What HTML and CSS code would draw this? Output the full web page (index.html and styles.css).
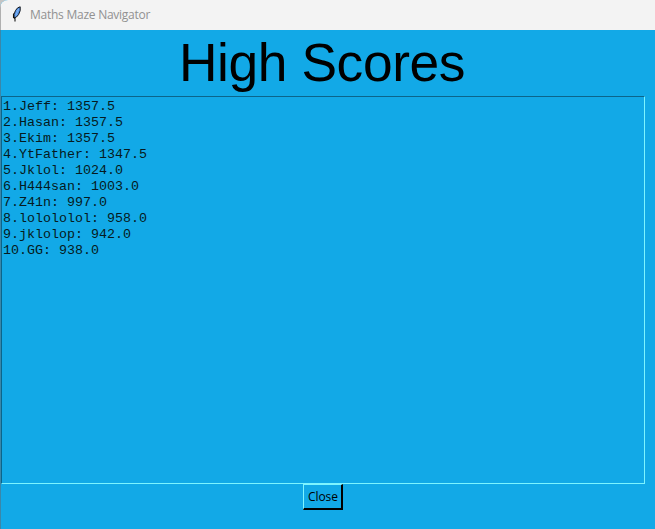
FILE: index.html
```html
<!DOCTYPE html>
<html lang="en">
<head>
<meta charset="utf-8">
<title>Maths Maze Navigator</title>
<link rel="stylesheet" href="styles.css">
</head>
<body>
<div class="window">
  <header class="titlebar">
    <svg class="feather" width="10" height="16" viewBox="0 0 10 16" aria-hidden="true">
      <path d="M8.2 .8 Q5.5 1 3.5 4.5 Q1.3 8.5 2 12 Q4.6 11.8 6.6 8.5 Q9 4.5 8.2 .8Z" fill="#5596ea" stroke="#15171c" stroke-width="1"/>
      <path d="M6.6 3 Q5 6 3.8 9.5" fill="none" stroke="#86b5f2" stroke-width="1"/>
      <path d="M1.5 7.5 V11.5 L3 12.5 V15.5" fill="none" stroke="#111" stroke-width="1.1"/>
    </svg>
    <span class="caption">Maths Maze Navigator</span>
  </header>
  <main class="content">
    <h1 class="heading">High Scores</h1>
    <pre class="scores">1.Jeff: 1357.5
2.Hasan: 1357.5
3.Ekim: 1357.5
4.YtFather: 1347.5
5.Jklol: 1024.0
6.H444san: 1003.0
7.Z41n: 997.0
8.lolololol: 958.0
9.jklolop: 942.0
10.GG: 938.0</pre>
    <button class="close">Close</button>
  </main>
</div>
</body>
</html>
```
FILE: styles.css
```css
* {
  box-sizing: border-box;
}

body {
  margin: 0;
  background: #c4c4c4;
}

.window {
  width: 655px;
  height: 529px;
  display: flex;
  flex-direction: column;
  border-top-left-radius: 8px;
  overflow: hidden;
  background: #12a9e7;
}

.titlebar {
  height: 30px;
  flex: none;
  display: flex;
  align-items: center;
  padding-left: 11px;
  border-left: 1px solid #b0b0b0;
  background: #f3f3f3;
}

.feather {
  margin-top: -2px;
}

.caption {
  margin-left: 8px;
  font: 12px/16px "Open Sans", sans-serif;
  letter-spacing: -0.25px;
  color: #919191;
}

.content {
  flex: 1;
  display: flex;
  flex-direction: column;
  align-items: center;
  padding-right: 10px;
  border-left: 1px solid #3a87a9;
}

.heading {
  margin: 0 2px 0 0;
  height: 66px;
  font: 400 53.333px/66px "Liberation Sans", Arial, sans-serif;
  letter-spacing: -0.4px;
  color: #000;
}

.scores {
  margin: 0;
  width: 644px;
  height: 388px;
  padding: 2px 1px 1px;
  border: 1px solid;
  border-color: #0b658b #7df4ff #7df4ff #0b658b;
  font: 13.333px/16px "Liberation Mono", "Courier New", monospace;
  color: #061a20;
}

.close {
  width: 40px;
  height: 26px;
  padding: 0 0 0 1px;
  border: solid;
  border-width: 1px 2px 2px 1px;
  border-color: #7df4ff #000 #000 #7df4ff;
  border-radius: 0;
  background: #12a9e7;
  font: 12px/20px "Open Sans", sans-serif;
  letter-spacing: -0.1px;
  color: #000;
}
```
